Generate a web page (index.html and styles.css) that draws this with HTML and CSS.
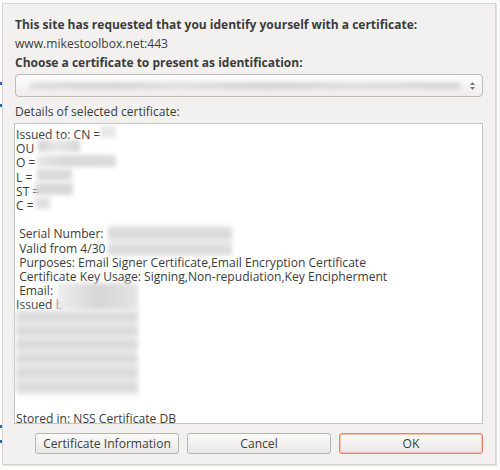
FILE: index.html
```html
<!DOCTYPE html>
<html>
<head>
<meta charset="utf-8">
<link rel="stylesheet" href="styles.css">
</head>
<body>
<span class="dot d1"></span><span class="dot d2"></span><span class="dot d3"></span><span class="dot d4"></span>
<div class="dialog">
  <div class="line bold">This site has requested that you identify yourself with a certificate:</div>
  <div class="line">www.mikestoolbox.net:443</div>
  <div class="line bold">Choose a certificate to present as identification:</div>
  <div class="select">
    <span class="sel-blur"></span>
    <svg class="spin" width="7" height="12" viewBox="0 0 7 12"><path d="M3.5 2 L6 5 L1 5 Z" fill="#777"/><path d="M1 7 L6 7 L3.5 10 Z" fill="#777"/></svg>
  </div>
  <div class="line label">Details of selected certificate:</div>
  <div class="details">
    <div class="text">
      <div>Issued to: CN =</div>
      <div>OU</div>
      <div>O =</div>
      <div>L =</div>
      <div>ST =</div>
      <div>C =</div>
      <div>&nbsp;</div>
      <div>&nbsp;Serial Number:</div>
      <div>&nbsp;Valid from 4/30</div>
      <div>&nbsp;Purposes: Email Signer Certificate,Email Encryption Certificate</div>
      <div>&nbsp;Certificate Key Usage: Signing,Non-repudiation,Key Encipherment</div>
      <div>&nbsp;Email:</div>
      <div>Issued b</div>
    </div>
    <div class="stored">Stored in: NSS Certificate DB</div>
    <span class="blur b-cn"></span>
    <span class="blur b-ou"></span>
    <span class="blur b-o"></span>
    <span class="blur b-l"></span>
    <span class="blur b-st"></span>
    <span class="blur b-c"></span>
    <span class="blur b-serial"></span>
    <span class="blur b-email"></span>
    <span class="blur b-issuer"></span>
  </div>
  <div class="buttons">
    <button class="btn">Certificate Information</button>
    <button class="btn">Cancel</button>
    <button class="btn ok">OK</button>
  </div>
</div>
</body>
</html>
```
FILE: styles.css
```css
html, body {
  margin: 0;
  padding: 0;
  background: #fbfbfb;
  width: 500px;
  height: 470px;
  overflow: hidden;
}
body {
  position: relative;
  font-family: "Open Sans", "Lato", sans-serif;
  font-size: 12.1px;
  color: #3c3c3c;
}
.dot {
  position: absolute;
  left: 0;
  width: 2px;
  height: 3px;
  background: #2a64b4;
}
.d1 { top: 82px; }
.d2 { top: 104px; }
.d3 { top: 425px; }
.d4 { top: 440px; }
.dialog {
  margin: 3px 0 0 2px;
  width: 494px;
  height: 462px;
  border: 1px solid #d8d5d0;
  box-shadow: 1px 1px 0 #e2e0dc;
  background: #f2f1f0;
  padding: 11px 12px 0 11px;
  box-sizing: border-box;
  display: flex;
  flex-direction: column;
}
.line {
  line-height: 19px;
  padding-left: 1px;
  white-space: nowrap;
}
.bold { font-weight: bold; font-size: 12px; }
.select {
  position: relative;
  margin: 2px 0 0 1px;
  height: 23px;
  flex: none;
  box-sizing: border-box;
  border: 1px solid #bdb9b3;
  border-radius: 4px;
  background: linear-gradient(#fdfdfd, #eeedeb);
  display: flex;
  align-items: center;
  justify-content: flex-end;
  padding-right: 6px;
}
.sel-blur {
  position: absolute;
  left: 14px;
  right: 22px;
  top: 8px;
  height: 6px;
  background: linear-gradient(90deg, #d8d8d8, #cfcfcf 20%, #dcdcdc 35%, #cccccc 55%, #d9d9d9 75%, #d0d0d0);
  filter: blur(2.5px);
}
.spin { display: block; }
.label { margin-top: 4px; line-height: 22px; }
.details {
  position: relative;
  height: 301px;
  flex: none;
  box-sizing: border-box;
  border: 1px solid #c5c2bd;
  background: #ffffff;
  padding: 4px 0 0 1px;
  display: flex;
  flex-direction: column;
  line-height: 14.2px;
  white-space: nowrap;
}
.stored {
  margin-top: auto;
  line-height: 14px;
  margin-bottom: -3px;
}
.blur {
  position: absolute;
  background: #e4e4e4;
  filter: blur(2px);
}
.b-cn { left: 85px; top: 2px; width: 16px; height: 12px; background: #e8e8e8; }
.b-ou { left: 23px; top: 16px; width: 42px; height: 12px; background: linear-gradient(90deg, #d0d0d0, #e8e8e8 40%, #d6d6d6); }
.b-o { left: 22px; top: 31px; width: 79px; height: 12px; background: linear-gradient(90deg, #e6e6e6, #d8d8d8 40%, #dcdcdc); }
.b-l { left: 22px; top: 45px; width: 35px; height: 12px; background: #dcdcdc; }
.b-st { left: 20px; top: 59px; width: 38px; height: 12px; background: #d8d8d8; }
.b-c { left: 20px; top: 73px; width: 15px; height: 12px; background: #e0e0e0; }
.b-serial { left: 93px; top: 102px; width: 124px; height: 30px; background: linear-gradient(#e6e6e6, #d6d6d6 30%, #ececec 50%, #d8d8d8 80%, #e8e8e8); }
.b-email { left: 42px; top: 159px; width: 81px; height: 27px; background: linear-gradient(90deg, #eeeeee, #d6d6d6 50%, #e4e4e4); }
.b-issuer { left: 1px; top: 186px; width: 122px; height: 85px; background: repeating-linear-gradient(#e8e8e8 0, #d7d7d7 7px, #ececec 14px); }
.buttons {
  display: flex;
  justify-content: flex-end;
  gap: 8px;
  margin-top: 9px;
}
.btn {
  width: 144px;
  height: 21px;
  box-sizing: border-box;
  border: 1px solid #b8b4ae;
  border-radius: 3px;
  background: linear-gradient(#fbfbfa, #e9e8e6);
  font-family: "Open Sans", "Lato", sans-serif;
  font-size: 12.1px;
  color: #3c3c3c;
  padding: 0;
  margin: 0;
  line-height: 19px;
}
.ok {
  border: 1px solid #e8835c;
  box-shadow: 0 0 0 1px #f4c2ad inset;
}
```
